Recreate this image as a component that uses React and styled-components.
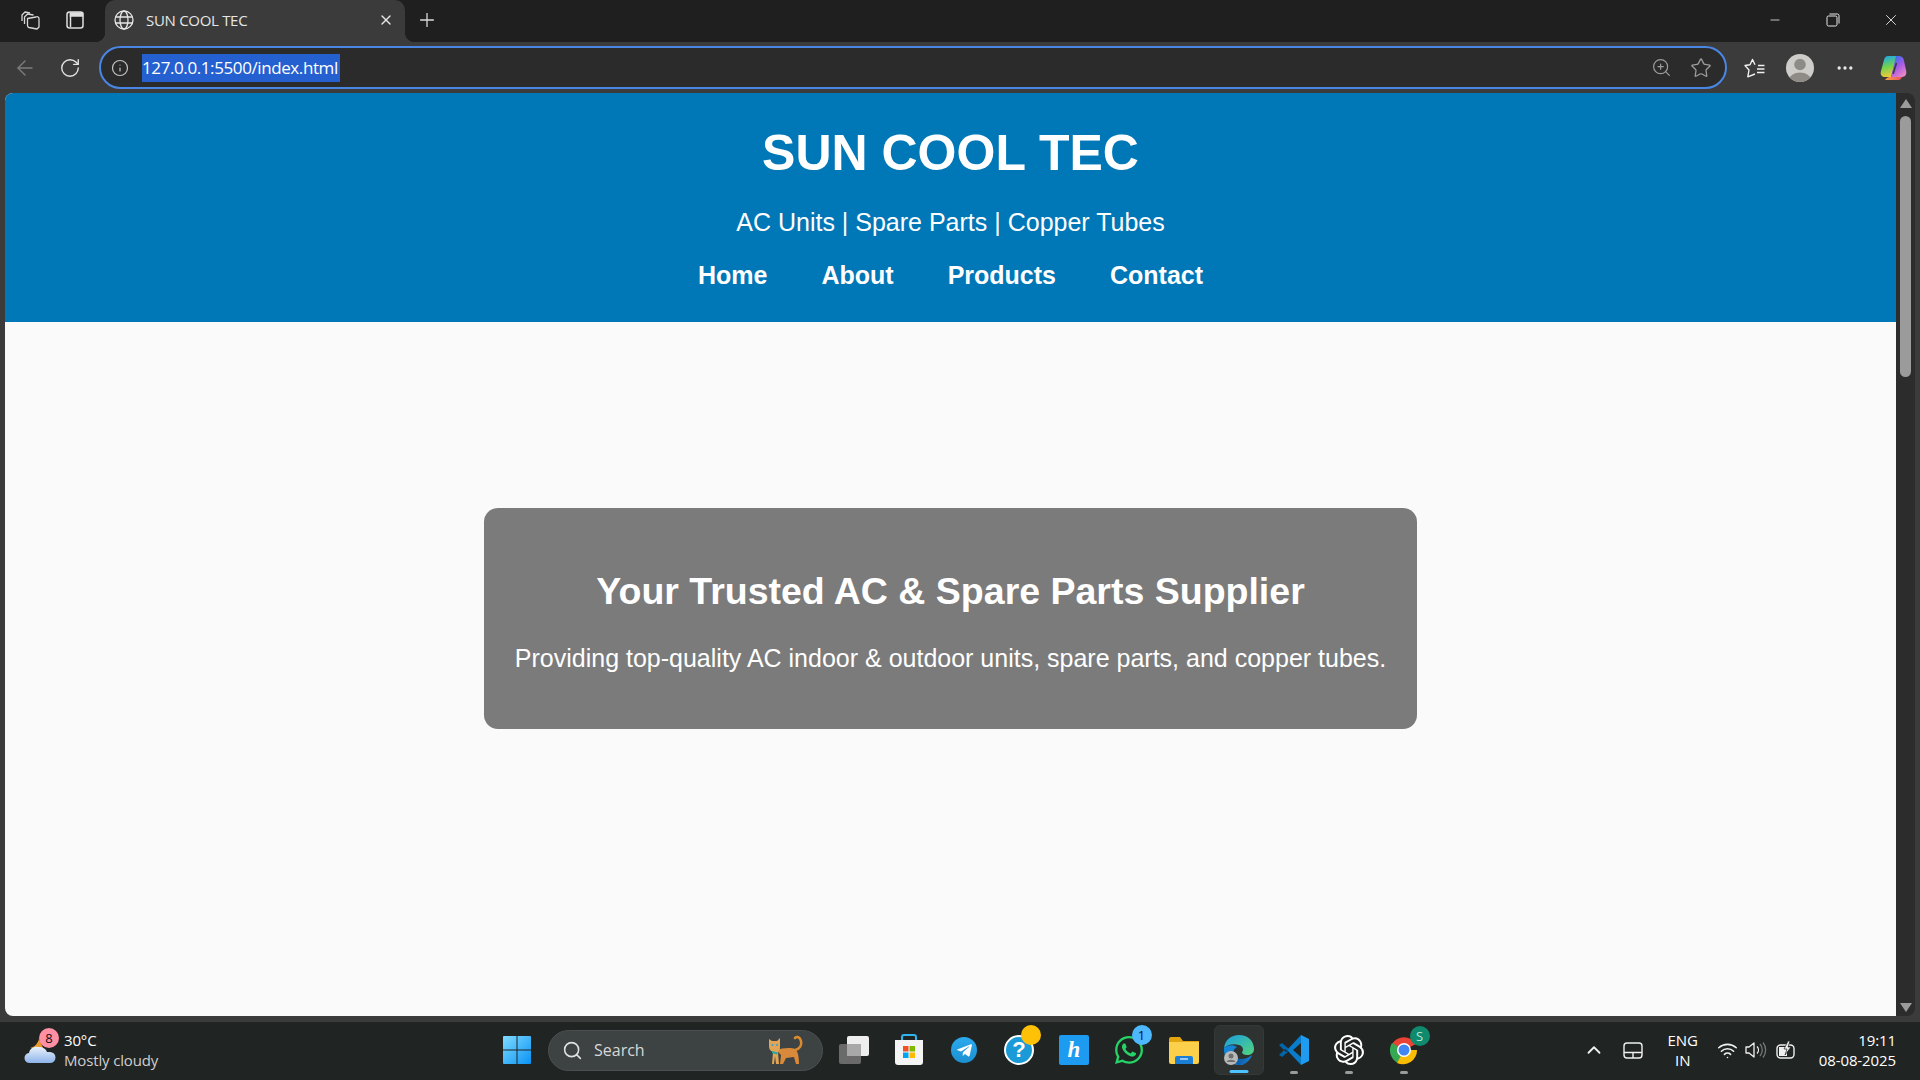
import React from "react";
import styled, { createGlobalStyle } from "styled-components";
import { FaWhatsapp, FaTelegramPlane } from "react-icons/fa";
import { SiOpenai } from "react-icons/si";
import { ArrowLeft, RotateCw, Info, ZoomIn, Star, X, Plus, Minus, MoreHorizontal, Search, ChevronUp, Wifi } from "lucide-react";

const GlobalStyle = createGlobalStyle`
  html, body { margin: 0; padding: 0; height: 100%; overflow: hidden; background: #3b3b3b; }
  * { box-sizing: border-box; }
`;

const uiFont = `"Open Sans", "Noto Sans", sans-serif`;
const pageFont = `"Liberation Sans", Arial, sans-serif`;

const Screen = styled.div`
  width: 1920px;
  height: 1080px;
  display: flex;
  flex-direction: column;
  background: #3b3b3b;
  font-family: ${uiFont};
`;

/* browser chrome */
const TabStrip = styled.div`
  height: 42px;
  flex: none;
  display: flex;
  align-items: center;
  background: #1f1f1f;
  color: #e8e8e8;
`;
const StripIcon = styled.div`
  width: ${(p) => p.$w || 45}px;
  height: 40px;
  margin-left: ${(p) => p.$ml || 0}px;
  margin-bottom: 2px;
  display: flex;
  align-items: center;
  justify-content: center;
  flex: none;
`;
const Tab = styled.div`
  position: relative;
  width: 300px;
  height: 42px;
  margin-left: 8px;
  padding: 0 11px 2px 9px;
  display: flex;
  align-items: center;
  gap: 12px;
  background: #3b3b3b;
  border-radius: 10px 10px 0 0;
  flex: none;

  &::before,
  &::after {
    content: "";
    position: absolute;
    bottom: 0;
    width: 10px;
    height: 10px;
  }
  &::before {
    left: -10px;
    background: radial-gradient(circle at 0 0, #1f1f1f 10px, #3b3b3b 10.5px);
  }
  &::after {
    right: -10px;
    background: radial-gradient(circle at 100% 0, #1f1f1f 10px, #3b3b3b 10.5px);
  }
`;
const TabTitle = styled.span`
  flex: 1;
  margin-top: -1px;
  font-size: 15px;
  letter-spacing: -0.3px;
  color: #e6e6e6;
`;
const WindowButtons = styled.div`
  margin-left: auto;
  display: flex;
  align-items: center;
`;
const Toolbar = styled.div`
  height: 51px;
  flex: none;
  display: flex;
  align-items: center;
  padding-left: 2px;
  background: #3b3b3b;
`;
const ToolButton = styled.div`
  width: ${(p) => p.$w || 45}px;
  height: 40px;
  flex: none;
  display: flex;
  align-items: center;
  justify-content: center;
`;
const AddressBar = styled.div`
  width: 1628px;
  height: 43px;
  margin-left: 7px;
  padding: 0 13px 0 10px;
  flex: none;
  display: flex;
  align-items: center;
  border: 2.5px solid #4a86e4;
  border-radius: 22px;
  background: #2b2b2b;
`;
const SelectedUrl = styled.span`
  margin-left: 13px;
  height: 28px;
  width: 198px;
  font-size: 17px;
  line-height: 27px;
  letter-spacing: -0.4px;
  white-space: nowrap;
  color: #fff;
  background: #2560d0;
`;
const BarIcons = styled.div`
  margin-left: auto;
  display: flex;
  align-items: center;
  gap: 18px;
`;
const Avatar = styled.div`
  width: 28px;
  height: 28px;
  border-radius: 50%;
  overflow: hidden;
  background: #cfcdc9;
`;

/* page */
const Viewport = styled.div`
  height: 923px;
  flex: none;
  display: flex;
  padding-left: 5px;
`;
const Page = styled.main`
  width: 1891px;
  flex: none;
  display: flex;
  flex-direction: column;
  background: #fafafa;
  border-radius: 8px 0 0 8px;
  overflow: hidden;
  font-family: ${pageFont};
  color: #fff;
`;
const Header = styled.header`
  height: 229px;
  flex: none;
  padding-top: 28px;
  text-align: center;
  background: #0077b6;
`;
const Title = styled.h1`
  margin: 0;
  font-size: 50px;
  line-height: 65px;
  font-weight: 700;
`;
const Subtitle = styled.p`
  margin: 22px 0 0;
  font-size: 25px;
  line-height: 29px;
`;
const Nav = styled.nav`
  margin-top: 24px;
  display: flex;
  justify-content: center;
  gap: 54px;
`;
const NavLink = styled.a`
  font-size: 25px;
  line-height: 29px;
  font-weight: 700;
  color: #fff;
`;
const Hero = styled.section`
  flex: 1;
  display: flex;
  justify-content: center;
  padding-top: 186px;
`;
const HeroCard = styled.div`
  width: 933px;
  height: 221px;
  padding-top: 62px;
  text-align: center;
  background: #7b7b7b;
  border-radius: 14px;
`;
const HeroTitle = styled.h2`
  margin: 0;
  font-size: 37.5px;
  line-height: 43px;
  font-weight: 700;
`;
const HeroText = styled.p`
  margin: 31px 0 0;
  font-size: 25px;
  line-height: 29px;
`;

const Scrollbar = styled.div`
  width: 19px;
  flex: none;
  padding: 4px;
  display: flex;
  flex-direction: column;
  align-items: center;
  background: #2c2c2c;
  border-radius: 0 8px 8px 0;
`;
const Thumb = styled.div`
  width: 11px;
  height: 261px;
  margin-top: 8px;
  border-radius: 6px;
  background: #9b9b9b;
`;
const Arrow = styled.div`
  width: 0;
  height: 0;
  border-left: 6px solid transparent;
  border-right: 6px solid transparent;
  ${(p) => (p.$down ? "border-top: 9px solid #9b9b9b; margin-top: auto;" : "border-bottom: 9px solid #9b9b9b; margin-top: 2px;")}
`;

/* taskbar */
const Taskbar = styled.footer`
  margin-top: 5px;
  height: 59px;
  padding-bottom: 2px;
  flex: none;
  display: flex;
  align-items: center;
  background: #202423;
  border-top: 1px solid #3a3d3c;
  color: #fff;
`;
const Weather = styled.div`
  width: 548px;
  flex: none;
  padding: 0 16px 0 24px;
  display: flex;
  align-items: center;
`;
const WeatherIcon = styled.div`
  position: relative;
  width: 34px;
  height: 40px;
  margin-right: 6px;
`;
const CountBadge = styled.span`
  position: absolute;
  top: ${(p) => p.$top ?? -2}px;
  right: ${(p) => p.$right ?? -1}px;
  width: ${(p) => p.$size || 20}px;
  height: ${(p) => p.$size || 20}px;
  border-radius: 50%;
  display: flex;
  align-items: center;
  justify-content: center;
  font-size: 13px;
  font-weight: 500;
  color: ${(p) => p.$color || "#111"};
  background: ${(p) => p.$bg};
`;
const WeatherText = styled.div`
  margin-top: -1px;
  display: flex;
  flex-direction: column;
  font-size: 15px;
  line-height: 20px;
  letter-spacing: -0.15px;
`;
const Muted = styled.span`
  color: #cfcfcf;
`;
const StartButton = styled.div`
  margin-left: auto;
  display: flex;
  align-items: center;
`;
const SearchBox = styled.div`
  width: 275px;
  height: 41px;
  flex: none;
  margin-right: 3.5px;
  padding: 0 18px 0 13px;
  display: flex;
  align-items: center;
  gap: 11px;
  border-radius: 21px;
  background: #3d4243;
  border: 1px solid #4b4f50;
  color: #d8d8d8;
  font-size: 16px;
`;
const SearchLabel = styled.span`
  flex: 1;
`;
const Slot = styled.div`
  position: relative;
  width: ${(p) => (p.$active ? 50 : 55)}px;
  height: 50px;
  flex: none;
  display: flex;
  align-items: center;
  justify-content: center;
  ${(p) => p.$active && "margin: 0 2.5px; background: #2e3231; border-radius: 6px; border: 1px solid #353938;"}
`;
const RunningDot = styled.span`
  position: absolute;
  bottom: 1px;
  left: 50%;
  height: 3px;
  width: ${(p) => (p.$active ? 19 : 8)}px;
  transform: translateX(-50%);
  border-radius: 2px;
  background: ${(p) => (p.$active ? "#4cc2ff" : "#9a9c9b")};
`;
const HelpCircle = styled.div`
  width: 30px;
  height: 30px;
  border-radius: 50%;
  border: 2px solid #fff;
  background: #1a9bd7;
  display: flex;
  align-items: center;
  justify-content: center;
  font: 700 22px ${pageFont};
  color: #fff;
`;
const HTile = styled.div`
  width: 30px;
  height: 30px;
  border-radius: 2px;
  background: #1d9bf0;
  display: flex;
  align-items: center;
  justify-content: center;
  font: italic 700 23px "Liberation Serif", serif;
  color: #fff;
`;
const Tele = styled.div`
  width: 26px;
  height: 26px;
  border-radius: 50%;
  background: linear-gradient(#2aabee, #1c8fd0);
  display: flex;
  align-items: center;
  justify-content: center;
`;
const Tray = styled.div`
  margin-left: auto;
  display: flex;
  align-items: center;
  padding-right: 24px;
`;
const TrayItem = styled.div`
  display: flex;
  align-items: center;
  justify-content: center;
  margin-left: ${(p) => p.$ml || 0}px;
`;
const Lang = styled.div`
  margin-left: 15px;
  margin-top: -1px;
  width: 50px;
  text-align: center;
  font-size: 15px;
  line-height: 20px;
`;
const Clock = styled.div`
  margin-left: 23px;
  margin-top: -1px;
  text-align: right;
  font-size: 15px;
  line-height: 20px;
  letter-spacing: -0.1px;
`;

const GlobeIcon = () => (
  <svg width="20" height="20" viewBox="0 0 20 20" fill="none" stroke="#e6e6e6" strokeWidth="1.3">
    <circle cx="10" cy="10" r="9" />
    <ellipse cx="10" cy="10" rx="4" ry="9" />
    <path d="M1.5 7h17M1.5 13h17" />
  </svg>
);

const WorkspacesIcon = () => (
  <svg width="22" height="22" viewBox="0 0 22 22" fill="none" stroke="#d8d8d8" strokeWidth="1.3" strokeLinejoin="round">
    <path d="M3 12V6l3-3 5 1" />
    <path d="M5.5 15V8l3-3 6 1" />
    <path d="M8.5 9.5 17 8a2 2 0 0 1 3 2v8l-2 2-8-1.5a2 2 0 0 1-1.5-2z" />
  </svg>
);

const TabsIcon = () => (
  <svg width="20" height="20" viewBox="0 0 20 20" fill="none" stroke="#e0e0e0" strokeWidth="1.5">
    <rect x="2" y="2" width="16" height="16" rx="2.5" />
    <path d="M5.5 3h12v3h-12z" fill="#e0e0e0" />
    <path d="M5.5 3v14" />
  </svg>
);

const RestoreIcon = () => (
  <svg width="14" height="14" viewBox="0 0 14 14" fill="none" stroke="#e8e8e8" strokeWidth="1">
    <rect x="1" y="3" width="10" height="10" rx="1.5" />
    <path d="M3.5 1h8a1.5 1.5 0 0 1 1.5 1.5v8" />
  </svg>
);

const FavoritesIcon = () => (
  <svg width="21" height="20" viewBox="0 0 21 20" fill="none" stroke="#f0f0f0" strokeWidth="1.4" strokeLinejoin="round">
    <path d="M11 16 3.8 18.800 5 12 1 7.500 6 6.800 8.500 1.500 11 6.800" />
    <path d="M14 7.500h6.500M13 11h7.500M13 14.500h7.500" />
  </svg>
);

const ProfileGlyph = () => (
  <svg width="28" height="28" viewBox="0 0 28 28">
    <circle cx="14" cy="10.5" r="5.8" fill="#8f8c88" />
    <ellipse cx="14" cy="26" rx="11" ry="7.5" fill="#8f8c88" />
  </svg>
);

const CopilotIcon = () => (
  <svg width="28" height="28" viewBox="0 0 28 28">
    <defs>
      <linearGradient id="copA" x1="0.3" y1="0" x2="0.5" y2="1">
        <stop offset="0" stopColor="#1ea7e8" />
        <stop offset="0.5" stopColor="#6fd34f" />
        <stop offset="1" stopColor="#f5c93a" />
      </linearGradient>
      <linearGradient id="copB" x1="0.2" y1="0" x2="0.8" y2="1">
        <stop offset="0" stopColor="#2c6ff0" />
        <stop offset="0.5" stopColor="#a85be6" />
        <stop offset="1" stopColor="#f08ac0" />
      </linearGradient>
      <linearGradient id="copC" x1="0" y1="0" x2="1" y2="0">
        <stop offset="0" stopColor="#f6a53d" />
        <stop offset="1" stopColor="#ee4f6a" />
      </linearGradient>
    </defs>
    <path d="M9 2h9l-6 21H6c-3.500 0-5-2.500-4-6L5 6c.6-2.500 2-4 4-4z" fill="url(#copA)" />
    <path d="M17 2h3c2.500 0 4 1.500 4.800 4l2.400 11c.6 3-1 6-4.200 6H12z" fill="url(#copB)" />
    <path d="M6 26h13c2.500 0 3.500-1.500 4-3H11c-2 0-3.500 1-5 3z" fill="url(#copC)" />
    <path d="M17.500 9 14 20" stroke="#3b3b3b" strokeWidth="1.6" />
  </svg>
);

const CloudIcon = () => (
  <svg width="34" height="36" viewBox="0 0 34 36">
    <defs>
      <linearGradient id="cloud" x1="0" y1="0" x2="0" y2="1">
        <stop offset="0" stopColor="#eaf1fb" />
        <stop offset="1" stopColor="#8db4ea" />
      </linearGradient>
    </defs>
    <path d="M5 18c3 0 8-2 10-9l4 9z" fill="#eb9a2a" />
    <path d="M6 33a5 5 0 0 1-1-10c1-5 5-7 10-6 4 0 7 2 8 5h3a5.500 5.500 0 0 1 0 11z" fill="url(#cloud)" />
  </svg>
);

const WindowsLogo = () => (
  <svg width="30" height="30" viewBox="0 0 30 30">
    <defs>
      <linearGradient id="win" x1="0" y1="0" x2="1" y2="1">
        <stop offset="0" stopColor="#7fdcff" />
        <stop offset="1" stopColor="#0a92f5" />
      </linearGradient>
    </defs>
    <path d="M1 2a1 1 0 0 1 1-1h12.500v13.500H1zM15.500 1H28a1 1 0 0 1 1 1v12.500H15.500zM1 15.500h13.500V29H2a1 1 0 0 1-1-1zM15.500 15.500H29V28a1 1 0 0 1-1 1H15.500z" fill="url(#win)" />
  </svg>
);

const CatIcon = () => (
  <svg width="36" height="32" viewBox="0 0 36 32">
    <path d="M27 16c5-1 7-5 6-9-1-4-4-5-6-3" fill="none" stroke="#d98a2e" strokeWidth="2.6" strokeLinecap="round" />
    <path d="M8 16c6-2 15-3 19-1 3 2 4 8 4 15h-3l-2-7-8 1-3 6h-3l1-9z" fill="#d8893a" />
    <path d="M1 5l3 2h5l3-3v9c0 3-1 4-2 5l1 12H8l-1-8-1 8H4l1-12c-3-1-4-3-4-6z" fill="#e2a455" />
    <path d="M4 17l6 1.500-1 2-5-1.500z" fill="#2ba6a0" />
    <circle cx="4.5" cy="11" r="1" fill="#2f9fd8" />
    <circle cx="9" cy="11" r="1" fill="#2f9fd8" />
  </svg>
);

const TaskViewIcon = () => (
  <svg width="32" height="30" viewBox="0 0 32 30">
    <rect x="1" y="9" width="22" height="20" rx="2" fill="#6a6a6a" />
    <rect x="9" y="1" width="22" height="20" rx="2" fill="#eeeeee" />
    <rect x="9" y="9" width="14" height="12" fill="#a8a8a8" />
  </svg>
);

const StoreIcon = () => (
  <svg width="30" height="32" viewBox="0 0 30 32">
    <path d="M8 6V3a2 2 0 0 1 2-2h10a2 2 0 0 1 2 2v3" fill="none" stroke="#2fb4ef" strokeWidth="2" />
    <path d="M1 6h28v22a3 3 0 0 1-3 3H4a3 3 0 0 1-3-3z" fill="#f4f4f4" />
    <rect x="9" y="12" width="5.5" height="5.5" fill="#f25022" />
    <rect x="15.5" y="12" width="5.5" height="5.5" fill="#7fba00" />
    <rect x="9" y="18.5" width="5.5" height="5.5" fill="#00a4ef" />
    <rect x="15.5" y="18.5" width="5.5" height="5.5" fill="#ffb900" />
  </svg>
);

const FolderIcon = () => (
  <svg width="30" height="28" viewBox="0 0 30 28">
    <path d="M0 3a2 2 0 0 1 2-2h9l3 4h16v5H0z" fill="#e5a50f" />
    <path d="M0 6h30v20a2 2 0 0 1-2 2H2a2 2 0 0 1-2-2z" fill="#fdd04c" />
    <path d="M6 28v-6a2 2 0 0 1 2-2h14a2 2 0 0 1 2 2v6z" fill="#1b7fd6" />
    <path d="M11 23h8" stroke="#cfe8ff" strokeWidth="1.4" />
  </svg>
);

const EdgeIcon = () => (
  <svg width="32" height="32" viewBox="0 0 32 32">
    <defs>
      <linearGradient id="edgeTop" x1="0" y1="0" x2="1" y2="1">
        <stop offset="0" stopColor="#1b9de2" />
        <stop offset="1" stopColor="#52d67b" />
      </linearGradient>
      <linearGradient id="edgeLow" x1="0" y1="0" x2="1" y2="0">
        <stop offset="0" stopColor="#0c59a4" />
        <stop offset="1" stopColor="#1a7fd1" />
      </linearGradient>
    </defs>
    <path d="M1 14C2 6 8 1 16 1c9 0 15 6 15 14 0 4-3 6-7 6-3 0-5-1-5-3 2-2 1-6-3-7-6-2-12 0-15 3z" fill="url(#edgeTop)" />
    <path d="M1 14c3-3 9-4 13-1-4 2-5 7-3 11 2 3 6 5 10 6-1 1-3 1-5 1C8 31 0 24 1 14z" fill="#1285d8" />
    <path d="M14 24c4 2 10 1 15-3-2 6-7 10-13 10-3 0-4-3-2-7z" fill="url(#edgeLow)" />
    <circle cx="8" cy="24" r="7" fill="#b9b9b9" />
    <circle cx="8" cy="22" r="2.5" fill="#6f6f6f" />
    <path d="M3.5 28c1-3 8-3 9 0z" fill="#6f6f6f" />
  </svg>
);

const VSCodeIcon = () => (
  <svg width="32" height="32" viewBox="0 0 32 32">
    <path d="M23 1 31 5v22l-8 4z" fill="#1f9cf0" />
    <path d="M23 1 9 16l14 15 0-8-8-7 8-7z" fill="#0a7ccc" />
    <path d="M1 11l3-2 7 6-3 3zM1 21l3 2 6-5-3-3z" fill="#0065a9" />
  </svg>
);

const ChromeIcon = () => (
  <svg width="30" height="30" viewBox="0 0 30 30">
    <path d="M15 15 3 9a14 14 0 0 1 24 0z" fill="#ea4335" />
    <path d="M15 15 9 28A14 14 0 0 1 3 8z" fill="#34a853" />
    <path d="M15 15h13a14 14 0 0 1-20 13z" fill="#fbbc04" />
    <circle cx="15" cy="15" r="7" fill="#fff" />
    <circle cx="15" cy="15" r="5.5" fill="#4285f4" />
  </svg>
);

const TouchpadIcon = () => (
  <svg width="20" height="17" viewBox="0 0 20 17" fill="none" stroke="#f0f0f0" strokeWidth="1.4">
    <rect x="1" y="1" width="18" height="15" rx="3" />
    <path d="M1 10.5h18M10 10.5V16" />
  </svg>
);

const VolumeIcon = () => (
  <svg width="22" height="18" viewBox="0 0 22 18" fill="none" stroke="#f0f0f0" strokeWidth="1.3" strokeLinejoin="round">
    <path d="M1 6h3l5-4v14l-5-4H1z" />
    <path d="M12 5.5a5 5 0 0 1 0 7" />
    <path d="M15 3a9 9 0 0 1 0 12M18 1.500a12 12 0 0 1 0 15" stroke="#777" />
  </svg>
);

const BatteryIcon = () => (
  <svg width="20" height="18" viewBox="0 0 20 18">
    <rect x="1" y="4" width="17" height="13" rx="3.5" fill="none" stroke="#f0f0f0" strokeWidth="1.4" />
    <rect x="3" y="6" width="8" height="9" fill="#f0f0f0" />
    <path d="M12 0l-4 8h3l-2 6 6-8h-3l2-6z" fill="#f0f0f0" stroke="#202423" strokeWidth="0.7" />
  </svg>
);

const navItems = ["Home", "About", "Products", "Contact"];

const App = () => {
  return (
    <Screen>
      <GlobalStyle />
      <TabStrip>
        <StripIcon $w={30} $ml={15}><WorkspacesIcon /></StripIcon>
        <StripIcon $w={44} $ml={8}><TabsIcon /></StripIcon>
        <Tab>
          <GlobeIcon />
          <TabTitle>SUN COOL TEC</TabTitle>
          <X size={16} color="#e6e6e6" />
        </Tab>
        <StripIcon $w={44}><Plus size={22} color="#dcdcdc" strokeWidth={1.4} /></StripIcon>
        <WindowButtons>
          <StripIcon $w={58}><Minus size={14} color="#e8e8e8" strokeWidth={1.4} /></StripIcon>
          <StripIcon $w={58}><RestoreIcon /></StripIcon>
          <StripIcon $w={58}><X size={18} color="#e8e8e8" strokeWidth={1.2} /></StripIcon>
        </WindowButtons>
      </TabStrip>

      <Toolbar>
        <ToolButton $w={45}><ArrowLeft size={24} color="#7d7d7d" strokeWidth={1.4} /></ToolButton>
        <ToolButton $w={45}><RotateCw size={22} color="#e4e4e4" strokeWidth={1.5} /></ToolButton>
        <AddressBar>
          <Info size={18} color="#c4c4c4" strokeWidth={1.6} />
          <SelectedUrl>127.0.0.1:5500/index.html</SelectedUrl>
          <BarIcons>
            <ZoomIn size={21} color="#9c9c9c" strokeWidth={1.4} />
            <Star size={22} color="#9c9c9c" strokeWidth={1.4} />
          </BarIcons>
        </AddressBar>
        <ToolButton $w={55}><FavoritesIcon /></ToolButton>
        <ToolButton $w={36}><Avatar><ProfileGlyph /></Avatar></ToolButton>
        <ToolButton $w={54}><MoreHorizontal size={20} color="#e8e8e8" /></ToolButton>
        <ToolButton $w={42}><CopilotIcon /></ToolButton>
      </Toolbar>

      <Viewport>
        <Page>
          <Header>
            <Title>SUN COOL TEC</Title>
            <Subtitle>AC Units | Spare Parts | Copper Tubes</Subtitle>
            <Nav>
              {navItems.map((item) => (
                <NavLink key={item}>{item}</NavLink>
              ))}
            </Nav>
          </Header>
          <Hero>
            <HeroCard>
              <HeroTitle>Your Trusted AC &amp; Spare Parts Supplier</HeroTitle>
              <HeroText>Providing top-quality AC indoor &amp; outdoor units, spare parts, and copper tubes.</HeroText>
            </HeroCard>
          </Hero>
        </Page>
        <Scrollbar>
          <Arrow />
          <Thumb />
          <Arrow $down />
        </Scrollbar>
      </Viewport>

      <Taskbar>
        <Weather>
          <WeatherIcon>
            <CloudIcon />
            <CountBadge $bg="#ff8fa3">8</CountBadge>
          </WeatherIcon>
          <WeatherText>
            <span>30°C</span>
            <Muted>Mostly cloudy</Muted>
          </WeatherText>
          <StartButton><WindowsLogo /></StartButton>
        </Weather>
        <SearchBox>
          <Search size={21} color="#e0e0e0" strokeWidth={1.8} />
          <SearchLabel>Search</SearchLabel>
          <CatIcon />
        </SearchBox>
        <Slot><TaskViewIcon /></Slot>
        <Slot><StoreIcon /></Slot>
        <Slot><Tele><FaTelegramPlane size={17} color="#fff" /></Tele></Slot>
        <Slot>
          <HelpCircle>?</HelpCircle>
          <CountBadge $bg="#ffc107" $top={0} $right={6} />
        </Slot>
        <Slot><HTile>h</HTile></Slot>
        <Slot>
          <FaWhatsapp size={32} color="#25d366" />
          <CountBadge $bg="#4db8ff" $top={0} $right={5}>1</CountBadge>
        </Slot>
        <Slot><FolderIcon /></Slot>
        <Slot $active>
          <EdgeIcon />
          <RunningDot $active />
        </Slot>
        <Slot>
          <VSCodeIcon />
          <RunningDot />
        </Slot>
        <Slot>
          <SiOpenai size={30} color="#fff" />
          <RunningDot />
        </Slot>
        <Slot>
          <ChromeIcon />
          <CountBadge $bg="#0f8a6c" $color="#b8e6d6" $top={1} $right={2}>S</CountBadge>
          <RunningDot />
        </Slot>
        <Tray>
          <TrayItem><ChevronUp size={22} color="#f0f0f0" strokeWidth={2} /></TrayItem>
          <TrayItem $ml={18}><TouchpadIcon /></TrayItem>
          <Lang>ENG<br />IN</Lang>
          <TrayItem $ml={9}><Wifi size={21} color="#f0f0f0" strokeWidth={1.8} /></TrayItem>
          <TrayItem $ml={7}><VolumeIcon /></TrayItem>
          <TrayItem $ml={9}><BatteryIcon /></TrayItem>
          <Clock>19:11<br />08-08-2025</Clock>
        </Tray>
      </Taskbar>
    </Screen>
  );
};

export default App;
